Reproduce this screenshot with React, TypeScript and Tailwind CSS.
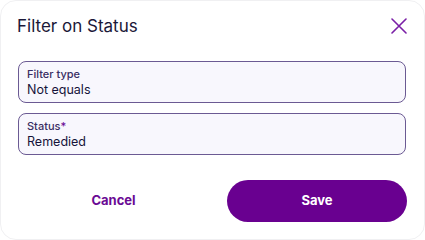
function Field({ label, value, required }: { label: string; value: string; required?: boolean }) {
  return (
    <div className="flex h-[42px] flex-col justify-center rounded-lg border border-[#6b5a93] bg-[#f8f7fd] px-[8px]">
      <div className="text-[11px] leading-[14px] font-medium text-[#3a2d63]">
        {label}
        {required && <span className="text-[#6a0a94]">*</span>}
      </div>
      <div className="text-[12.5px] leading-[17px] text-[#16133a]">{value}</div>
    </div>
  );
}

export default function App() {
  return (
    <div className="h-[240px] w-[425px] bg-white font-['Inter',sans-serif]">
      <div className="flex h-full flex-col rounded-2xl border border-[#f0f0f2] bg-white px-[16px]">
        <div className="flex items-center justify-between pt-[13px]">
          <h1 className="text-[17px] leading-[24px] font-normal text-[#1b1838]">Filter on Status</h1>
          <svg width="16" height="16" viewBox="0 0 16 16" className="mr-px text-[#7a1fa6]">
            <path d="M1 1 L15 15 M15 1 L1 15" stroke="currentColor" strokeWidth="1.6" strokeLinecap="round" />
          </svg>
        </div>
        <div className="mt-[23px] flex flex-col gap-[10px] pl-px pr-[2px]">
          <Field label="Filter type" value="Not equals" />
          <Field label="Status" value="Remedied" required />
        </div>
        <div className="mt-[25px] flex items-center pr-px">
          <button className="flex h-[42px] w-[193px] items-center justify-center text-[13px] font-bold text-[#6a0a94]">
            Cancel
          </button>
          <button className="ml-[17px] flex h-[42px] flex-1 items-center justify-center rounded-full bg-[#690090] text-[13px] font-bold text-white">
            Save
          </button>
        </div>
      </div>
    </div>
  );
}
